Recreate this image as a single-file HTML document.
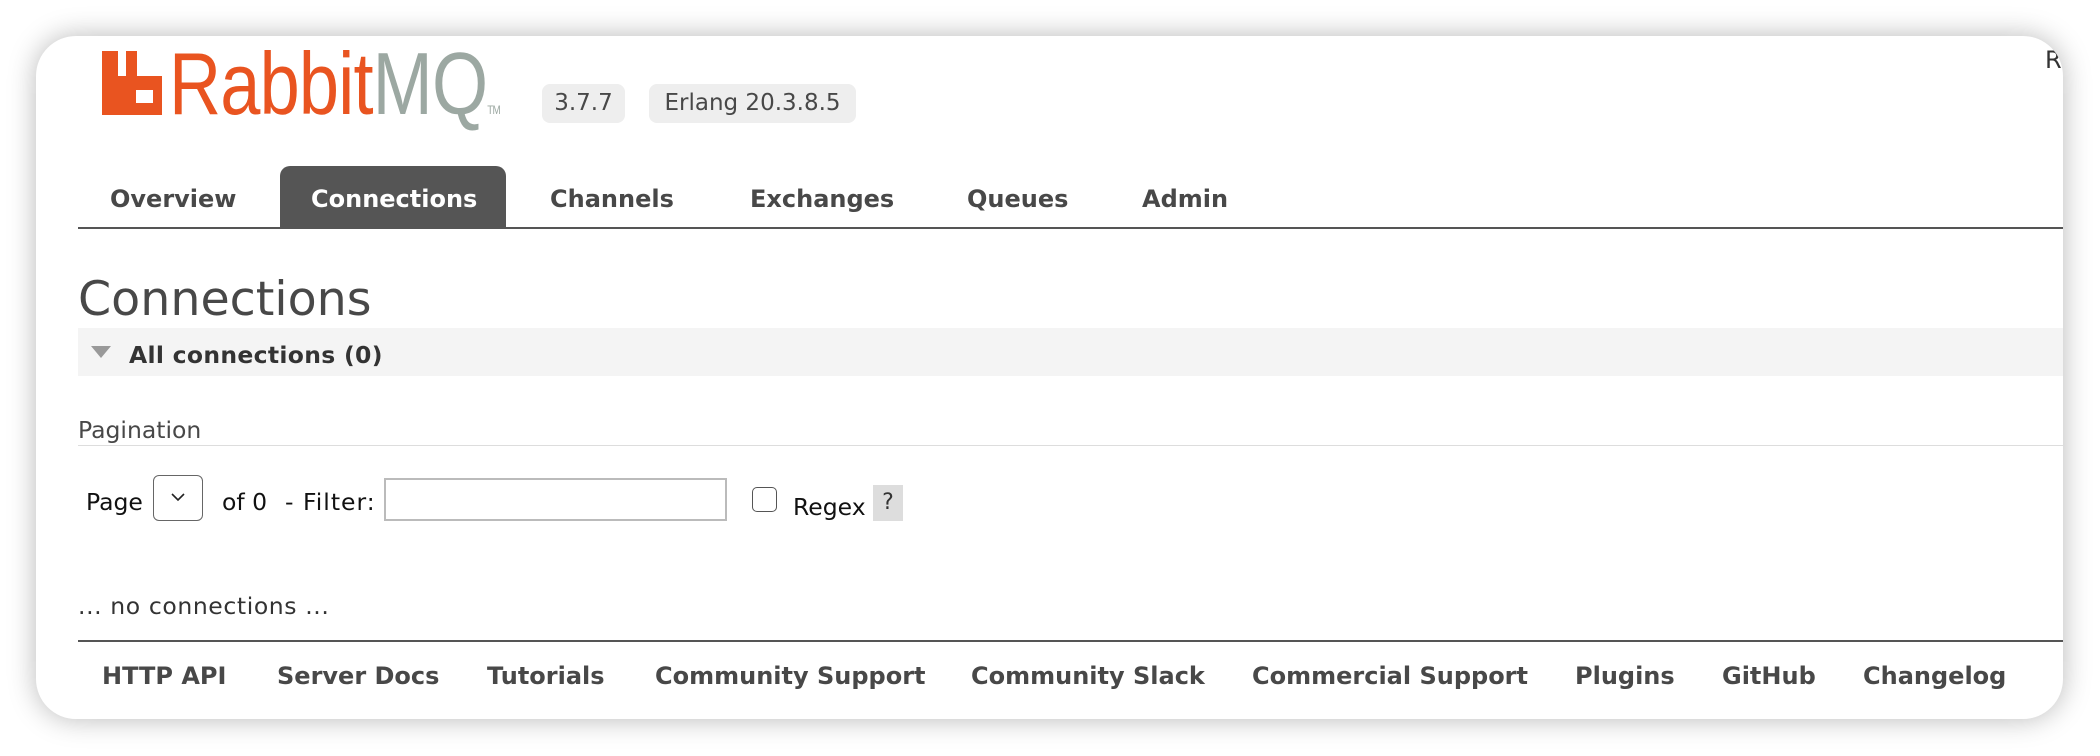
<!DOCTYPE html>
<html><head><meta charset="utf-8"><style>
body{margin:0;width:2100px;height:756px;background:#fff;position:relative;overflow:hidden;font-family:"DejaVu Sans","Liberation Sans",sans-serif;color:#484848}
.card{position:absolute;left:36px;top:36px;width:2027px;height:683px;background:#fff;border-radius:40px;box-shadow:0 0 28px rgba(0,0,0,0.28);overflow:hidden}
.a{position:absolute;white-space:nowrap}
.badge{position:absolute;background:#eee;border-radius:8px;height:39px;line-height:39px;font-size:23px;color:#484848;text-align:center}
.nav{font-weight:bold;font-size:24px;color:#484848;top:0;line-height:24px}
.foot{font-weight:bold;font-size:24px;color:#484848;line-height:24px}
.r{font-size:23.5px;line-height:26px;color:#111}
</style></head><body>
<div class="card">
 <svg class="a" style="left:66px;top:15px" width="61" height="65" viewBox="0 0 61 65">
  <path d="M0 0H16V25H24V0H35V25H60V64H0Z M34 39V52H51V39Z" fill="#e95420" fill-rule="evenodd"/>
 </svg>
 <div class="a" style="left:133px;top:4px;font-family:'Liberation Sans',sans-serif;font-size:88px;line-height:88px;transform:scaleX(0.82);transform-origin:0 0;letter-spacing:-1px"><span style="color:#e95420">Rabbit</span><span style="color:#9ca8a2">MQ</span><span style="font-size:12px;color:#9ca8a2">TM</span></div>
 <div class="a" style="left:2009px;top:10px;font-size:24px;color:#333">R</div>
 <div class="badge" style="left:506px;top:48px;width:83px">3.7.7</div>
 <div class="badge" style="left:613px;top:48px;width:207px">Erlang 20.3.8.5</div>

 <div class="a" style="left:244px;top:130px;width:226px;height:62px;background:#555;border-radius:10px 10px 0 0"></div>
 <div class="a" style="left:42px;top:191px;width:2000px;height:2px;background:#555"></div>
 <div class="a nav" style="left:74px;top:151px">Overview</div>
 <div class="a nav" style="left:275px;top:151px;color:#fff">Connections</div>
 <div class="a nav" style="left:514px;top:151px">Channels</div>
 <div class="a nav" style="left:714px;top:151px">Exchanges</div>
 <div class="a nav" style="left:931px;top:151px">Queues</div>
 <div class="a nav" style="left:1106px;top:151px">Admin</div>

 <div class="a" style="left:42px;top:236px;font-size:47.5px;line-height:56px;color:#484848">Connections</div>
 <div class="a" style="left:42px;top:292px;width:2000px;height:48px;background:#f4f4f4"></div>
 <svg class="a" style="left:55px;top:310px" width="20" height="12"><path d="M0 0H20L10 12Z" fill="#999"/></svg>
 <div class="a" style="left:93px;top:306px;font-size:23.5px;font-weight:bold;line-height:26px;color:#333;letter-spacing:0.3px">All connections (0)</div>

 <div class="a r" style="left:42px;top:381px;color:#484848">Pagination</div>
 <div class="a" style="left:42px;top:409px;width:2000px;height:1px;background:#ddd"></div>
 <div class="a r" style="left:50px;top:453px">Page</div>
 <div class="a" style="left:117px;top:439px;width:50px;height:46px;border:1.5px solid #666;border-radius:6px;box-sizing:border-box"></div>
 <svg class="a" style="left:135px;top:457px" width="14" height="9"><path d="M1 1L7 7L13 1" stroke="#222" stroke-width="1.6" fill="none"/></svg>
 <div class="a r" style="left:186px;top:453px">of 0</div>
 <div class="a r" style="left:249px;top:453px;letter-spacing:1px">- Filter:</div>
 <div class="a" style="left:348px;top:442px;width:343px;height:43px;border:2px solid #bbb;box-sizing:border-box"></div>
 <div class="a" style="left:716px;top:451px;width:25px;height:25px;border:1.5px solid #555;border-radius:5px;box-sizing:border-box"></div>
 <div class="a r" style="left:757px;top:458px">Regex</div>
 <div class="a" style="left:837px;top:449px;width:30px;height:36px;background:#ddd;font-size:22px;line-height:36px;text-align:center;color:#333">?</div>

 <div class="a r" style="left:42px;top:557px;color:#333;letter-spacing:0.6px">... no connections ...</div>
 <div class="a" style="left:42px;top:604px;width:2000px;height:2px;background:#555"></div>
 <div class="a foot" style="left:66px;top:628px">HTTP API</div>
 <div class="a foot" style="left:241px;top:628px">Server Docs</div>
 <div class="a foot" style="left:451px;top:628px">Tutorials</div>
 <div class="a foot" style="left:619px;top:628px">Community Support</div>
 <div class="a foot" style="left:935px;top:628px">Community Slack</div>
 <div class="a foot" style="left:1216px;top:628px">Commercial Support</div>
 <div class="a foot" style="left:1539px;top:628px">Plugins</div>
 <div class="a foot" style="left:1686px;top:628px">GitHub</div>
 <div class="a foot" style="left:1827px;top:628px">Changelog</div>
</div>
</body></html>
